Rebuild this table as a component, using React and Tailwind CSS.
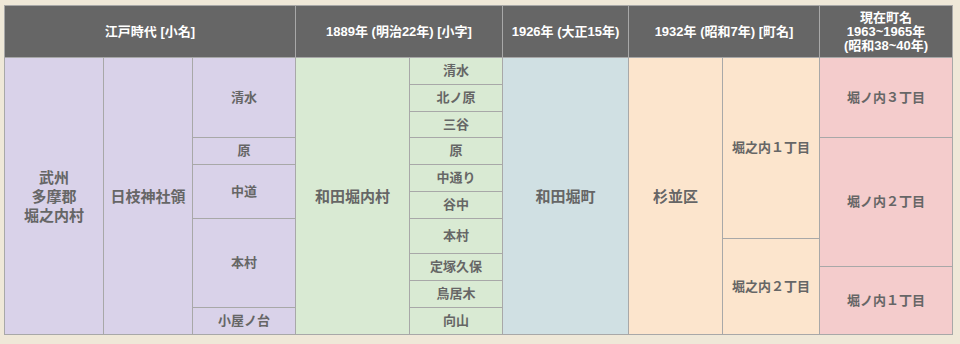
import React from 'react';

// Header cells of the history table
const HEADERS = [
  { label: ['江戸時代 [小名]'], cls: 'col-start-1 col-end-4' },
  { label: ['1889年 (明治22年) [小字]'], cls: 'col-start-4 col-end-6' },
  { label: ['1926年 (大正15年)'], cls: 'col-start-6 col-end-7' },
  { label: ['1932年 (昭和7年) [町名]'], cls: 'col-start-7 col-end-9' },
  { label: ['現在町名', '1963~1965年', '(昭和38~40年)'], cls: 'col-start-9 col-end-10' },
];

const PURPLE = 'bg-[#d9d2e9]';
const GREEN = 'bg-[#d9ead3]';
const BLUE = 'bg-[#d0e0e3]';
const PEACH = 'bg-[#fce5cd]';
const PINK = 'bg-[#f4cccc]';

// Body cells: grid placement + colour + size of text
const CELLS = [
  { text: ['武州', '多摩郡', '堀之内村'], cls: `col-start-1 row-start-2 row-end-14 ${PURPLE}`, big: true },
  { text: ['日枝神社領'], cls: `col-start-2 row-start-2 row-end-14 ${PURPLE}`, big: true },

  { text: ['清水'], cls: `col-start-3 row-start-2 row-end-5 ${PURPLE}` },
  { text: ['原'], cls: `col-start-3 row-start-5 row-end-6 ${PURPLE}` },
  { text: ['中道'], cls: `col-start-3 row-start-6 row-end-8 ${PURPLE}` },
  { text: ['本村'], cls: `col-start-3 row-start-8 row-end-13 ${PURPLE}` },
  { text: ['小屋ノ台'], cls: `col-start-3 row-start-13 row-end-14 ${PURPLE}` },

  { text: ['和田堀内村'], cls: `col-start-4 row-start-2 row-end-14 ${GREEN}`, big: true },

  { text: ['清水'], cls: `col-start-5 row-start-2 row-end-3 ${GREEN}` },
  { text: ['北ノ原'], cls: `col-start-5 row-start-3 row-end-4 ${GREEN}` },
  { text: ['三谷'], cls: `col-start-5 row-start-4 row-end-5 ${GREEN}` },
  { text: ['原'], cls: `col-start-5 row-start-5 row-end-6 ${GREEN}` },
  { text: ['中通り'], cls: `col-start-5 row-start-6 row-end-7 ${GREEN}` },
  { text: ['谷中'], cls: `col-start-5 row-start-7 row-end-8 ${GREEN}` },
  { text: ['本村'], cls: `col-start-5 row-start-8 row-end-10 ${GREEN}` },
  { text: ['定塚久保'], cls: `col-start-5 row-start-10 row-end-12 ${GREEN}` },
  { text: ['鳥居木'], cls: `col-start-5 row-start-12 row-end-13 ${GREEN}` },
  { text: ['向山'], cls: `col-start-5 row-start-13 row-end-14 ${GREEN}` },

  { text: ['和田堀町'], cls: `col-start-6 row-start-2 row-end-14 ${BLUE}`, big: true },
  { text: ['杉並区'], cls: `col-start-7 row-start-2 row-end-14 ${PEACH}`, big: true },

  { text: ['堀之内１丁目'], cls: `col-start-8 row-start-2 row-end-9 ${PEACH}` },
  { text: ['堀之内２丁目'], cls: `col-start-8 row-start-9 row-end-14 ${PEACH}` },

  { text: ['堀ノ内３丁目'], cls: `col-start-9 row-start-2 row-end-5 ${PINK}` },
  { text: ['堀ノ内２丁目'], cls: `col-start-9 row-start-5 row-end-11 ${PINK}` },
  { text: ['堀ノ内１丁目'], cls: `col-start-9 row-start-11 row-end-14 ${PINK}` },
];

export default function App() {
  return (
    <div
      className="w-[960px] h-[344px] bg-[#efe8d8] pl-[4px] pt-[5px]"
      style={{ fontFamily: '"Liberation Sans", "Noto Sans CJK JP", sans-serif' }}
    >
      <div className="grid w-fit gap-px p-px bg-[#a8a8a8] grid-cols-[98px_88px_102px_113px_92px_125px_93px_96px_132px] grid-rows-[51px_26px_26px_25px_26px_26px_26px_19px_14px_12px_13px_26px_26px]">
        {HEADERS.map((h, i) => (
          <div
            key={i}
            className={`${h.cls} row-start-1 row-end-2 bg-[#666666] text-white font-bold text-[13px] leading-[14px] flex flex-col items-center justify-center text-center`}
          >
            {h.label.map((l) => (
              <span key={l}>{l}</span>
            ))}
          </div>
        ))}
        {CELLS.map((c, i) => (
          <div
            key={i}
            className={`${c.cls} flex flex-col items-center justify-center text-center font-bold text-[#666666] ${
              c.big ? 'text-[15px] leading-[19px]' : 'text-[13px] leading-[16px]'
            }`}
          >
            {c.text.map((t) => (
              <span key={t}>{t}</span>
            ))}
          </div>
        ))}
      </div>
    </div>
  );
}
